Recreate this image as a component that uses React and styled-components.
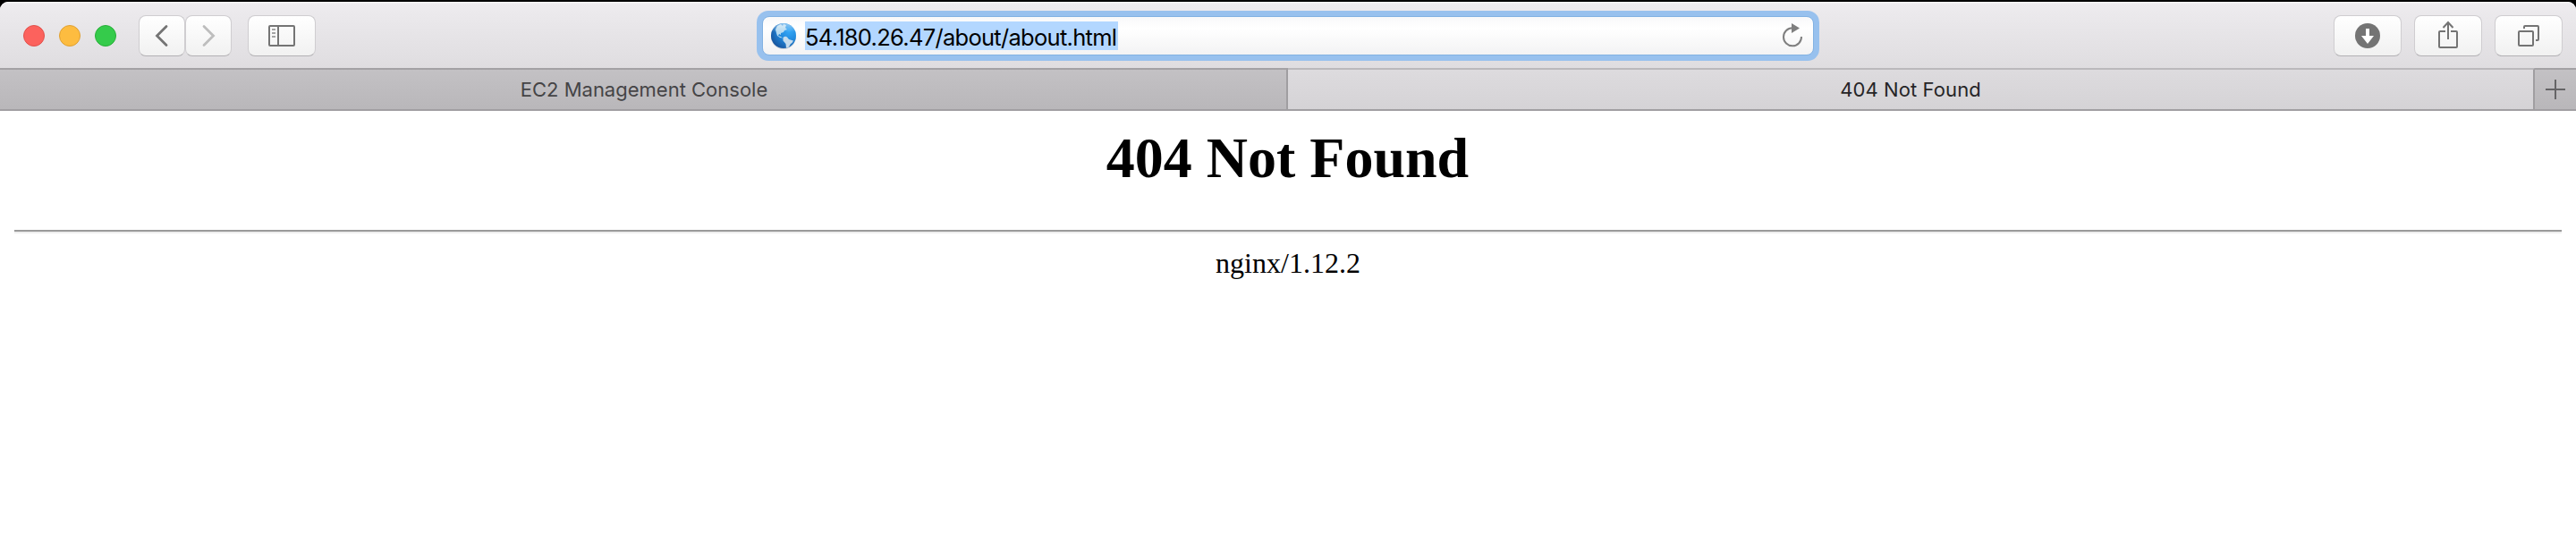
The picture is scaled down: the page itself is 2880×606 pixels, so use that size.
import React from "react";
import styled, { createGlobalStyle } from "styled-components";

const GlobalStyle = createGlobalStyle`
  *, *::before, *::after { box-sizing: border-box; }
  body { margin: 0; background: #fff; }
`;

const Desktop = styled.div`
  height: 606px;
  padding-top: 2px;
  background: #000;
  overflow: hidden;
`;

const Window = styled.div`
  height: 604px;
  display: flex;
  flex-direction: column;
  background: #fff;
  border-radius: 9px 9px 0 0;
  overflow: hidden;
  font-family: Inter, "Liberation Sans", sans-serif;
`;

const Toolbar = styled.header`
  height: 74px;
  flex: none;
  display: grid;
  grid-template-columns: 846px 1188px 1fr;
  align-items: center;
  background: linear-gradient(#f6f5f6 0, #edebee 3px, #dfdde0 100%);
`;

const LeftControls = styled.div`
  display: flex;
  align-items: center;
  padding: 2px 0 0 26px;
`;

const TrafficLights = styled.div`
  display: flex;
  gap: 16px;
  margin-right: 25px;
`;

const Light = styled.span`
  width: 24px;
  height: 24px;
  border-radius: 50%;
  background: ${(p) => p.$fill};
  border: 1px solid ${(p) => p.$edge};
`;

const NavGroup = styled.div`
  display: flex;
  margin-right: 18px;
`;

const ToolButton = styled.button`
  width: ${(p) => p.$width}px;
  height: 46px;
  padding: 0;
  display: flex;
  align-items: center;
  justify-content: center;
  border: 1px solid #cfcdd0;
  border-bottom-color: #b3b1b4;
  border-radius: 8px;
  background: linear-gradient(#fff, #f1f1f1);
  color: ${(p) => p.$color || "#747474"};

  svg { display: block; flex: none; }
`;

const RightControls = styled.div`
  display: flex;
  justify-content: flex-end;
  gap: 14px;
  padding: 2px 15px 0 0;
`;

const AddressBar = styled.div`
  height: 56px;
  margin-top: 2px;
  padding: 6px;
  border-radius: 13px;
  background: #98c1ee;
`;

const AddressField = styled.div`
  height: 44px;
  display: flex;
  align-items: center;
  padding: 0 11px 0 8px;
  border: 1px solid #83b2e2;
  border-radius: 8px;
  background: linear-gradient(#f9f9fa, #fff 30%, #f3f3f4);
`;

const Url = styled.span`
  width: 350px;
  height: 32px;
  margin: 0 auto 0 9px;
  line-height: 35px;
  font-size: 25.5px;
  letter-spacing: -0.71px;
  white-space: nowrap;
  color: #000;
  background: #b3d7ff;
`;

const TabBar = styled.nav`
  height: 48px;
  flex: none;
  display: grid;
  grid-template-columns: 1440px 1394px 46px;
`;

const Tab = styled.div`
  display: flex;
  align-items: center;
  justify-content: center;
  padding-left: ${(p) => (p.$first ? 2 : 0)}px;
  font-size: 22px;
  letter-spacing: ${(p) => (p.$active ? 0.1 : 0)}px;
  color: ${(p) => (p.$active ? "#262527" : "#454446")};
  border-top: 2px solid ${(p) => (p.$active ? "#bbb9bc" : "#a3a1a4")};
  border-bottom: 2px solid #a19fa2;
  border-right: ${(p) => (p.$last ? "none" : "2px solid #a09ea1")};
  background: ${(p) =>
    p.$active
      ? "linear-gradient(#dddbde, #d5d3d6)"
      : "linear-gradient(#c3c1c4, #b9b7ba)"};

  svg { display: block; }
`;

const Page = styled.main`
  flex: 1;
  padding: 16px 16px 0;
  background: #fff;
  font-family: "Liberation Serif", "Times New Roman", serif;
  text-align: center;
  color: #000;
`;

const Title = styled.h1`
  margin: 0 0 44px;
  padding-right: 1px;
  font-size: 64px;
  line-height: 73px;
  font-weight: bold;
`;

const Rule = styled.hr`
  height: 4px;
  margin: 0 0 15px;
  border: 0;
  border-top: 2px solid #9a9a9a;
  background: #eee;
`;

const Server = styled.p`
  margin: 0;
  font-size: 32px;
  line-height: 36px;
`;

const Chevron = ({ forward }) => (
  <svg width="16" height="26" viewBox="0 0 16 26" fill="none" stroke="currentColor" strokeWidth="2.8" strokeLinecap="round" strokeLinejoin="miter">
    <path d={forward ? "M3 2.5 13.5 13 3 23.5" : "M13 2.5 2.5 13 13 23.5"} />
  </svg>
);

const SidebarIcon = () => (
  <svg width="30" height="24" viewBox="0 0 30 24" fill="none" stroke="currentColor" strokeWidth="2">
    <rect x="1" y="1" width="28" height="22" rx="1" />
    <path d="M11 1V23" />
    <path d="M4 5H8M4 9H8M4 13H8" stroke="#a4a4a4" />
  </svg>
);

const Globe = () => (
  <svg width="30" height="32" viewBox="0 0 30 32">
    <defs>
      <radialGradient id="sea" cx="0.72" cy="0.3" r="0.85">
        <stop offset="0" stopColor="#35a9f8" />
        <stop offset="0.45" stopColor="#2189dd" />
        <stop offset="1" stopColor="#174f96" />
      </radialGradient>
      <linearGradient id="sheen" x1="0" y1="0" x2="0" y2="1">
        <stop offset="0" stopColor="#fff" stopOpacity="0.5" />
        <stop offset="0.35" stopColor="#fff" stopOpacity="0" />
      </linearGradient>
      <clipPath id="ball"><circle cx="15" cy="16" r="14" /></clipPath>
    </defs>
    <circle cx="15" cy="17" r="14" fill="#cdd2d8" />
    <circle cx="15" cy="16" r="14" fill="url(#sea)" />
    <g clipPath="url(#ball)">
      <path d="M8 5 12 3 14 5 15 3 18 4 17 7 19 9 16 10 15 12 12 13 12 15 10 14 9 16 12 17 14 18.5 11 18 8 16 7 13 6 9Z" fill="#b5daf0" />
      <path d="M14.5 18Q17 16 19 17.5L21 20 26 21.5Q25 24 23 25L20 30H18L17.5 25 14.5 21.5Z" fill="#c5dced" />
      <circle cx="15" cy="16" r="14" fill="url(#sheen)" />
    </g>
  </svg>
);

const ReloadIcon = () => (
  <svg width="24" height="28" viewBox="0 0 24 28">
    <path d="M12 5.3A10 10 0 1 0 22 15" fill="none" stroke="#7f7f7f" strokeWidth="2" />
    <path d="M11 0 20 5.5 11 11Z" fill="#7f7f7f" />
  </svg>
);

const DownloadIcon = () => (
  <svg width="28" height="28" viewBox="0 0 28 28">
    <circle cx="14" cy="14" r="14" fill="currentColor" />
    <path d="M12 6H16V14H21L14 23 7 14H12Z" fill="#fff" />
  </svg>
);

const ShareIcon = () => (
  <svg width="22" height="34" viewBox="0 0 22 34" fill="none" stroke="currentColor" strokeWidth="2">
    <path d="M8 12H2Q1 12 1 13V29Q1 30 2 30H20Q21 30 21 29V13Q21 12 20 12H14" />
    <path d="M11 21V2M5.5 8 11 2 16.5 8" />
  </svg>
);

const WindowsIcon = () => (
  <svg width="24" height="24" viewBox="0 0 24 24" fill="none" stroke="currentColor" strokeWidth="2">
    <rect x="1" y="7" width="16" height="16" rx="1" />
    <path d="M7 4V2Q7 1 8 1H22Q23 1 23 2V16Q23 17 22 17H20" />
  </svg>
);

const PlusIcon = () => (
  <svg width="22" height="22" viewBox="0 0 22 22" stroke="#656466" strokeWidth="2">
    <path d="M11 0V22M0 11H22" />
  </svg>
);

export default function App() {
  return (
    <Desktop>
      <GlobalStyle />
      <Window>
        <Toolbar>
          <LeftControls>
            <TrafficLights>
              <Light $fill="#fc625d" $edge="#e1504b" />
              <Light $fill="#fdbc40" $edge="#dfa032" />
              <Light $fill="#35cb4b" $edge="#27af38" />
            </TrafficLights>
            <NavGroup>
              <ToolButton $width={52} aria-label="Back"><Chevron /></ToolButton>
              <ToolButton $width={52} $color="#bdbdbd" aria-label="Forward"><Chevron forward /></ToolButton>
            </NavGroup>
            <ToolButton $width={76} aria-label="Sidebar"><SidebarIcon /></ToolButton>
          </LeftControls>
          <AddressBar>
            <AddressField>
              <Globe />
              <Url>54.180.26.47/about/about.html</Url>
              <ReloadIcon />
            </AddressField>
          </AddressBar>
          <RightControls>
            <ToolButton $width={76} aria-label="Downloads"><DownloadIcon /></ToolButton>
            <ToolButton $width={76} aria-label="Share"><ShareIcon /></ToolButton>
            <ToolButton $width={76} aria-label="Show tabs"><WindowsIcon /></ToolButton>
          </RightControls>
        </Toolbar>
        <TabBar>
          <Tab $first>EC2 Management Console</Tab>
          <Tab $active>404 Not Found</Tab>
          <Tab $last><PlusIcon /></Tab>
        </TabBar>
        <Page>
          <Title>404 Not Found</Title>
          <Rule />
          <Server>nginx/1.12.2</Server>
        </Page>
      </Window>
    </Desktop>
  );
}
